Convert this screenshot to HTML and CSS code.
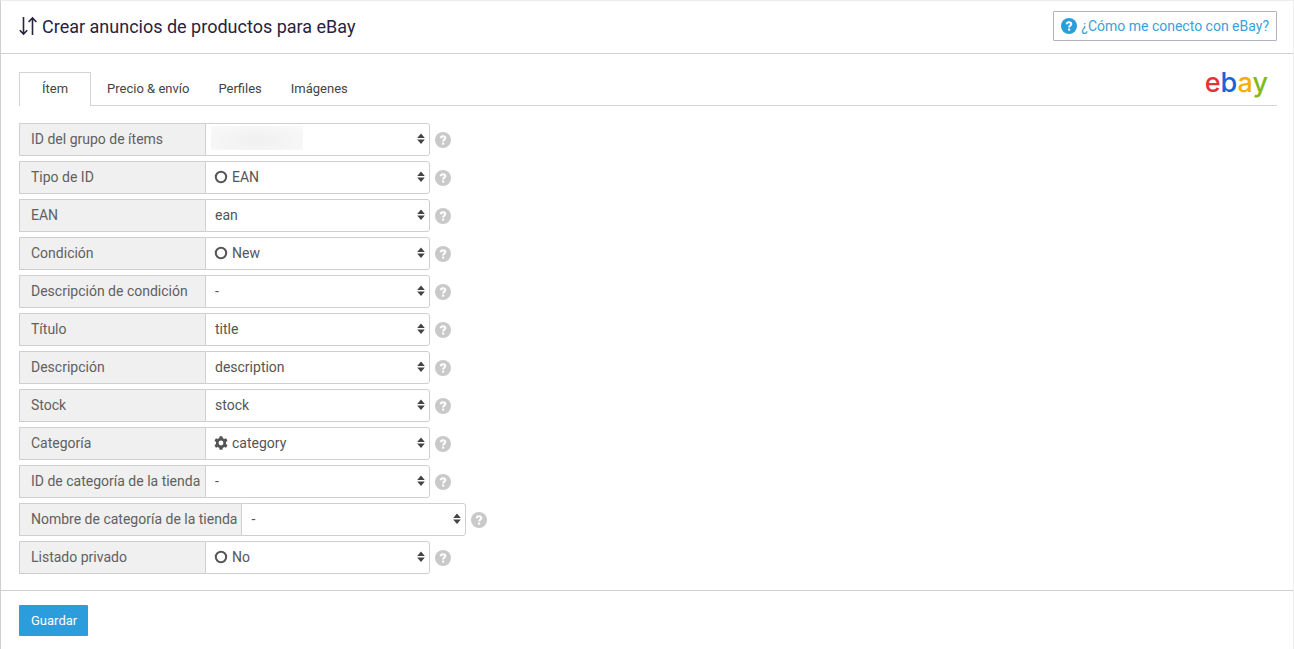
FILE: index.html
```html
<!DOCTYPE html>
<html lang="es">
<head>
    <meta charset="UTF-8">
    <meta name="viewport" content="width=device-width, initial-scale=1.0">
    <title>Crear anuncios de productos para eBay</title>
    <link rel="stylesheet" href="styles.css">
</head>
<body>

<!-- Shared icons -->
<svg class="sprite" aria-hidden="true">
    <symbol id="sort" viewBox="0 0 8 12">
        <path d="M4 0.5L7.8 5H0.2zM4 11L0.2 6.5H7.8z"/>
    </symbol>
    <symbol id="help" viewBox="0 0 16 16">
        <circle cx="8" cy="8" r="8"/>
        <path class="mark" d="M5.7 6.2C5.8 4.8 6.7 4.2 8 4.2S10.3 4.9 10.3 6.1C10.3 7.7 8.1 7.6 8.1 9.4"/>
        <rect class="dot" x="7" y="10.6" width="2.2" height="2"/>
    </symbol>
    <symbol id="circle" viewBox="0 0 14 14">
        <circle class="ring" cx="7" cy="7" r="5.2"/>
    </symbol>
    <symbol id="gear" viewBox="0 0 14 14">
        <path fill-rule="evenodd" d="M5.6 0.2H8.4L8.8 2.1L10.2 2.9L12.1 2.3L13.5 4.7L12 6.1V7.9L13.5 9.3L12.1 11.7L10.2 11.1L8.8 11.9L8.4 13.8H5.6L5.2 11.9L3.8 11.1L1.9 11.7L0.5 9.3L2 7.9V6.1L0.5 4.7L1.9 2.3L3.8 2.9L5.2 2.1zM7 4.6A2.4 2.4 0 1 0 7 9.4A2.4 2.4 0 1 0 7 4.6z"/>
    </symbol>
</svg>

<div class="panel">
    <header class="header">
        <h1 class="title">
            <svg class="title-icon" viewBox="0 0 18 20" aria-hidden="true">
                <path d="M4.5 1V18M0.8 14.2L4.5 18L8.2 14.2M13.5 19V2M9.6 6L13.5 2L17.4 6"/>
            </svg>
            Crear anuncios de productos para eBay
        </h1>
        <a class="help-link" href="#">
            <svg class="help-icon" aria-hidden="true"><use href="#help"/></svg>
            ¿Cómo me conecto con eBay?
        </a>
    </header>

    <form class="form">
        <div class="content">
            <div class="tab-bar">
                <nav class="tabs">
                    <a class="tab active" href="#">Ítem</a>
                    <a class="tab" href="#">Precio &amp; envío</a>
                    <a class="tab" href="#">Perfiles</a>
                    <a class="tab" href="#">Imágenes</a>
                </nav>
                <div class="logo"><span class="red">e</span><span class="blue">b</span><span class="yellow">a</span><span class="green">y</span></div>
            </div>

            <div class="fields">
                <div class="row">
                    <label for="grupo">ID del grupo de ítems</label>
                    <div class="select-box">
                        <select id="grupo"><option value=""></option></select>
                        <span class="hidden-value"></span>
                        <svg class="sort"><use href="#sort"/></svg>
                    </div>
                    <button type="button" class="help" aria-label="Ayuda"><svg class="help-icon"><use href="#help"/></svg></button>
                </div>
                <div class="row">
                    <label for="tipo">Tipo de ID</label>
                    <div class="select-box with-icon">
                        <select id="tipo"><option>EAN</option></select>
                        <svg class="value-icon"><use href="#circle"/></svg>
                        <svg class="sort"><use href="#sort"/></svg>
                    </div>
                    <button type="button" class="help" aria-label="Ayuda"><svg class="help-icon"><use href="#help"/></svg></button>
                </div>
                <div class="row">
                    <label for="ean">EAN</label>
                    <div class="select-box">
                        <select id="ean"><option>ean</option></select>
                        <svg class="sort"><use href="#sort"/></svg>
                    </div>
                    <button type="button" class="help" aria-label="Ayuda"><svg class="help-icon"><use href="#help"/></svg></button>
                </div>
                <div class="row">
                    <label for="condicion">Condición</label>
                    <div class="select-box with-icon">
                        <select id="condicion"><option>New</option></select>
                        <svg class="value-icon"><use href="#circle"/></svg>
                        <svg class="sort"><use href="#sort"/></svg>
                    </div>
                    <button type="button" class="help" aria-label="Ayuda"><svg class="help-icon"><use href="#help"/></svg></button>
                </div>
                <div class="row">
                    <label for="desc-condicion">Descripción de condición</label>
                    <div class="select-box">
                        <select id="desc-condicion"><option>-</option></select>
                        <svg class="sort"><use href="#sort"/></svg>
                    </div>
                    <button type="button" class="help" aria-label="Ayuda"><svg class="help-icon"><use href="#help"/></svg></button>
                </div>
                <div class="row">
                    <label for="titulo">Título</label>
                    <div class="select-box">
                        <select id="titulo"><option>title</option></select>
                        <svg class="sort"><use href="#sort"/></svg>
                    </div>
                    <button type="button" class="help" aria-label="Ayuda"><svg class="help-icon"><use href="#help"/></svg></button>
                </div>
                <div class="row">
                    <label for="descripcion">Descripción</label>
                    <div class="select-box">
                        <select id="descripcion"><option>description</option></select>
                        <svg class="sort"><use href="#sort"/></svg>
                    </div>
                    <button type="button" class="help" aria-label="Ayuda"><svg class="help-icon"><use href="#help"/></svg></button>
                </div>
                <div class="row">
                    <label for="stock">Stock</label>
                    <div class="select-box">
                        <select id="stock"><option>stock</option></select>
                        <svg class="sort"><use href="#sort"/></svg>
                    </div>
                    <button type="button" class="help" aria-label="Ayuda"><svg class="help-icon"><use href="#help"/></svg></button>
                </div>
                <div class="row">
                    <label for="categoria">Categoría</label>
                    <div class="select-box with-icon">
                        <select id="categoria"><option>category</option></select>
                        <svg class="value-icon"><use href="#gear"/></svg>
                        <svg class="sort"><use href="#sort"/></svg>
                    </div>
                    <button type="button" class="help" aria-label="Ayuda"><svg class="help-icon"><use href="#help"/></svg></button>
                </div>
                <div class="row">
                    <label for="id-tienda">ID de categoría de la tienda</label>
                    <div class="select-box">
                        <select id="id-tienda"><option>-</option></select>
                        <svg class="sort"><use href="#sort"/></svg>
                    </div>
                    <button type="button" class="help" aria-label="Ayuda"><svg class="help-icon"><use href="#help"/></svg></button>
                </div>
                <div class="row">
                    <label for="nombre-tienda">Nombre de categoría de la tienda</label>
                    <div class="select-box">
                        <select id="nombre-tienda"><option>-</option></select>
                        <svg class="sort"><use href="#sort"/></svg>
                    </div>
                    <button type="button" class="help" aria-label="Ayuda"><svg class="help-icon"><use href="#help"/></svg></button>
                </div>
                <div class="row">
                    <label for="privado">Listado privado</label>
                    <div class="select-box with-icon">
                        <select id="privado"><option>No</option></select>
                        <svg class="value-icon"><use href="#circle"/></svg>
                        <svg class="sort"><use href="#sort"/></svg>
                    </div>
                    <button type="button" class="help" aria-label="Ayuda"><svg class="help-icon"><use href="#help"/></svg></button>
                </div>
            </div>
        </div>

        <div class="footer">
            <button type="submit" class="btn-save">Guardar</button>
        </div>
    </form>
</div>

</body>
</html>
```
FILE: styles.css
```css
* {
    box-sizing: border-box;
}
body {
    margin: 0;
    font-family: Roboto, "Liberation Sans", sans-serif;
    font-size: 14px;
    color: #606060;
    background: #fff;
}
.sprite {
    display: none;
}
.panel {
    min-height: 100vh;
    border: 1px solid #ededed;
    border-left-color: #cfcfcf;
    border-bottom: none;
}
.header {
    display: flex;
    justify-content: space-between;
    align-items: center;
    height: 53px;
    padding: 0 16px 2px 18px;
    border-bottom: 1px solid #d0d0d0;
}
.title {
    display: flex;
    align-items: center;
    gap: 5px;
    margin: 0;
    font-size: 18px;
    font-weight: 400;
    color: #27233f;
}
.title-icon {
    width: 18px;
    height: 20px;
    fill: none;
    stroke: #27233f;
    stroke-width: 1.6;
}
.help-link {
    display: flex;
    align-items: center;
    gap: 4px;
    height: 30px;
    padding: 0 7px;
    border: 1px solid #b3b3bf;
    border-radius: 1px;
    color: #3a9fdb;
    text-decoration: none;
}
.help-icon {
    display: block;
    width: 16px;
    height: 16px;
    fill: #c9c9c9;
}
.help-link .help-icon {
    fill: #2a9ddb;
}
.mark {
    fill: none;
    stroke: #fff;
    stroke-width: 2;
}
.dot {
    fill: #fff;
}
.content {
    padding: 18px 16px 16px 18px;
}

/* Tabs */
.tab-bar {
    display: flex;
    justify-content: space-between;
    height: 34px;
    margin-bottom: 17px;
    border-bottom: 1px solid #d3d3d3;
}
.tabs {
    display: flex;
    height: 34px;
}
.tab {
    padding: 0 12px 0 15px;
    border: 1px solid transparent;
    border-bottom: none;
    font-size: 13px;
    line-height: 32px;
    color: #444;
    text-decoration: none;
}
.tab.active {
    padding: 0 22px;
    border-color: #d3d3d3;
    background: #fff;
}
.logo {
    padding-right: 9px;
    font-family: Inter, "Liberation Sans", sans-serif;
    font-size: 27px;
    font-weight: 500;
    line-height: 22px;
}
.red {
    color: #e53238;
}
.blue {
    color: #1266d8;
}
.yellow {
    color: #f5af02;
}
.green {
    color: #86b817;
}

/* Fields */
.fields {
    display: flex;
    flex-direction: column;
    gap: 5px;
}
.row {
    display: flex;
    align-items: center;
    height: 33px;
}
.row label {
    min-width: 186px;
    height: 33px;
    padding: 0 4px 0 11px;
    border: 1px solid #cfcfcf;
    border-right: none;
    border-radius: 1px 0 0 1px;
    background: #f0f0f0;
    line-height: 31px;
    white-space: nowrap;
}
.select-box {
    position: relative;
    width: 225px;
    height: 33px;
}
.select-box select {
    width: 100%;
    height: 33px;
    padding: 0 24px 1px 9px;
    border: 1px solid #cfcfcf;
    border-radius: 0 3px 3px 0;
    background: #fff;
    color: #555;
    font-family: inherit;
    font-size: 14px;
    appearance: none;
}
.with-icon select {
    padding-left: 26px;
}
.value-icon {
    position: absolute;
    top: 9px;
    left: 9px;
    width: 14px;
    height: 14px;
    fill: #555;
    pointer-events: none;
}
.ring {
    fill: none;
    stroke: #555;
    stroke-width: 2;
}
.sort {
    position: absolute;
    top: 10px;
    right: 5px;
    width: 8px;
    height: 12px;
    fill: #444;
    pointer-events: none;
}
.hidden-value {
    position: absolute;
    top: 3px;
    left: 6px;
    width: 92px;
    height: 24px;
    background: radial-gradient(ellipse at 50% 60%, #f0f0f0, #f9f9f9 100%);
    pointer-events: none;
}
.help {
    margin-left: 5px;
    padding: 0;
    border: none;
    background: none;
    cursor: pointer;
}

/* Footer */
.footer {
    padding: 14px 18px;
    border-top: 1px solid #d0d0d0;
}
.btn-save {
    height: 31px;
    padding: 0 11px 1px 12px;
    border: none;
    border-radius: 1px;
    background: #2b9ddc;
    color: #fff;
    font-family: inherit;
    font-size: 13px;
    cursor: pointer;
}
.btn-save:hover {
    background: #2389c2;
}
```
